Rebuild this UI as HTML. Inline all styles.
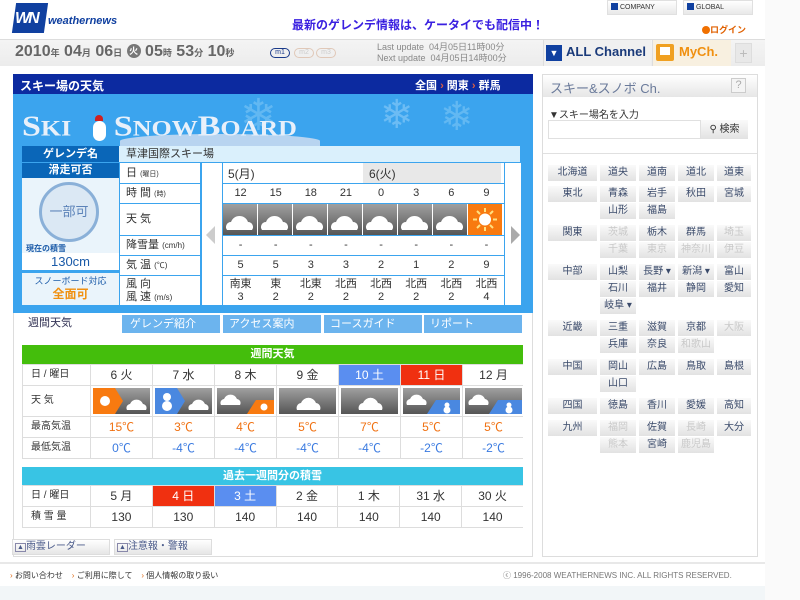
<!DOCTYPE html>
<html><head><meta charset="utf-8"><style>
*{margin:0;padding:0;box-sizing:border-box}
body{width:800px;height:600px;background:#fff;font-family:"Liberation Sans","Noto Sans CJK JP",sans-serif;position:relative;overflow:hidden;color:#333}
.a{position:absolute}
.rg{position:absolute;height:16px;font-size:10px;line-height:16px;text-align:center;color:#3a4a6a;background:linear-gradient(#fafafa,#e2e2e2);}
.rg.d{color:#c8c8c8}
.cell{position:absolute;background:#fff;text-align:center;font-size:11px;line-height:19px;color:#333}
.lb{position:absolute;background:#fff;font-size:10px;color:#333;padding-left:6px}
</style></head><body>
<svg width="0" height="0" style="position:absolute"><defs><linearGradient id="g" x1="0" y1="0" x2="0" y2="1"><stop offset="0" stop-color="#a0a0a0"/><stop offset="1" stop-color="#555"/></linearGradient></defs></svg>
<!-- header -->
<div class="a" style="left:14px;top:3px;width:32px;height:30px;background:#1040a0;transform:skewX(-8deg)"></div>
<div class="a" style="left:15px;top:10px;color:#fff;font-weight:bold;font-style:italic;font-size:16px;letter-spacing:-2px">WN</div>
<div class="a" style="left:48px;top:15px;color:#1040a0;font-weight:bold;font-style:italic;font-size:11px">weathernews</div>
<div class="a" style="left:292px;top:16px;color:#3a20e0;font-weight:bold;font-size:12px">最新のゲレンデ情報は、ケータイでも配信中！</div>
<div class="a" style="left:607px;top:0;width:70px;height:15px;background:linear-gradient(#fff,#e8e8e8);border:1px solid #e0e0e0;font-size:7px;line-height:13px;padding-left:3px;color:#333"><span style="display:inline-block;width:7px;height:7px;background:#1040a0;vertical-align:-1px"></span> COMPANY</div>
<div class="a" style="left:683px;top:0;width:70px;height:15px;background:linear-gradient(#fff,#e8e8e8);border:1px solid #e0e0e0;font-size:7px;line-height:13px;padding-left:3px;color:#333"><span style="display:inline-block;width:7px;height:7px;background:#1040a0;vertical-align:-1px"></span> GLOBAL</div>
<div class="a" style="left:702px;top:23px;font-size:9px;font-weight:bold;color:#e06000"><span style="display:inline-block;width:8px;height:8px;border-radius:4px;background:#f07000;vertical-align:-1px"></span>ログイン</div>
<!-- date bar -->
<div class="a" style="left:0;top:39px;width:765px;height:27px;background:linear-gradient(#f4f4f4,#ececec);border-top:1px solid #ddd"></div>
<div class="a" style="left:15px;top:43px;font-size:16px;font-weight:bold;color:#666">2010<span style="font-size:9px">年</span> 04<span style="font-size:9px">月</span> 06<span style="font-size:9px">日</span> <span style="display:inline-block;width:14px;height:14px;border-radius:7px;background:#777;color:#fff;font-size:9px;text-align:center;line-height:14px;vertical-align:2px">火</span> 05<span style="font-size:9px">時</span> 53<span style="font-size:9px">分</span> 10<span style="font-size:9px">秒</span></div>
<div class="a" style="left:270px;top:48px;width:20px;height:10px;border:1px solid #1a3a8a;border-radius:5px;font-size:7px;line-height:8px;text-align:center;color:#1a3a8a">m1</div>
<div class="a" style="left:294px;top:48px;width:20px;height:10px;border:1px solid #e0c8b8;border-radius:5px;font-size:7px;line-height:8px;text-align:center;color:#ccc">m2</div>
<div class="a" style="left:316px;top:48px;width:20px;height:10px;border:1px solid #e0c8b8;border-radius:5px;font-size:7px;line-height:8px;text-align:center;color:#ccc">m3</div>
<div class="a" style="left:377px;top:42px;font-size:9px;line-height:11px;color:#888">Last update&nbsp; 04月05日11時00分<br>Next update&nbsp; 04月05日14時00分</div>
<div class="a" style="left:543px;top:40px;width:108px;height:26px;border-left:1px solid #ddd;background:#f0f0f0"></div>
<div class="a" style="left:546px;top:45px;width:16px;height:16px;background:#1040a0;color:#fff;font-size:9px;text-align:center;line-height:16px">▼</div>
<div class="a" style="left:566px;top:44px;font-size:13px;font-weight:bold;color:#1a3a7a">ALL Channel</div>
<div class="a" style="left:652px;top:40px;width:79px;height:26px;background:#f8f0e0;border-left:1px solid #ddd"></div>
<div class="a" style="left:656px;top:44px;width:18px;height:17px;background:#f0a020;border-radius:2px"></div>
<div class="a" style="left:660px;top:47px;width:10px;height:8px;background:#fff"></div>
<div class="a" style="left:679px;top:44px;font-size:13px;font-weight:bold;color:#f09010">MyCh.</div>
<div class="a" style="left:735px;top:43px;width:17px;height:20px;background:#e8e8e8;border:1px solid #ddd;color:#bbb;font-size:14px;text-align:center;line-height:18px">+</div>
<div class="a" style="left:765px;top:0;width:35px;height:600px;background:#fafafa"></div>

<!-- main left -->
<div class="a" style="left:13px;top:74px;width:520px;height:483px;border:1px solid #ddd;background:#fff"></div>
<div class="a" style="left:13px;top:74px;width:520px;height:20px;background:#0c2aa0"></div>
<div class="a" style="left:20px;top:77px;color:#fff;font-size:12px;font-weight:bold">スキー場の天気</div>
<div class="a" style="left:415px;top:77px;color:#fff;font-size:11px;font-weight:bold">全国 <span style="color:#e06040">›</span> 関東 <span style="color:#e06040">›</span> 群馬</div>
<div class="a" style="left:13px;top:94px;width:520px;height:219px;background:#3ba4ee"></div>
<div class="a" style="left:240px;top:90px;font-size:44px;color:#62b8f2">❄</div>
<div class="a" style="left:380px;top:92px;font-size:40px;color:#6cbcf4">❄</div>
<div class="a" style="left:440px;top:94px;font-size:40px;color:#62b8f2">❄</div>
<div class="a" style="left:120px;top:134px;width:200px;height:14px;background:#b8d4f0;border-radius:50% 50% 0 0"></div>
<div class="a" style="left:22px;top:108px;font-size:34px;font-weight:bold;font-family:'Liberation Serif',serif;color:#e8f0fa;letter-spacing:0px;line-height:38px;transform:scaleY(0.85)">S<span style="font-size:26px">KI</span>&nbsp;&nbsp;&nbsp;&nbsp;&nbsp;S<span style="font-size:26px">NOW</span>B<span style="font-size:26px">OARD</span></div>
<div class="a" style="left:93px;top:121px;width:13px;height:20px;background:#fff;border-radius:7px"></div>
<div class="a" style="left:95px;top:115px;width:8px;height:6px;background:#d02020;border-radius:4px 4px 0 0"></div>
<!-- gelande name -->
<div class="a" style="left:22px;top:146px;width:97px;height:16px;background:#0a66b8;color:#fff;font-size:11px;font-weight:bold;text-align:center;line-height:16px">ゲレンデ名</div>
<div class="a" style="left:119px;top:146px;width:401px;height:16px;background:#daf0fc;font-size:11px;line-height:16px;padding-left:7px">草津国際スキー場</div>
<!-- left column -->
<div class="a" style="left:22px;top:163px;width:97px;height:15px;background:#0a66b8;color:#fff;font-size:11px;font-weight:bold;text-align:center;line-height:15px">滑走可否</div>
<div class="a" style="left:22px;top:178px;width:97px;height:92px;background:#eaf4fb"></div>
<div class="a" style="left:39px;top:182px;width:60px;height:60px;border:3px solid #8ab0d8;border-radius:50%;background:#dbe8f4;color:#5b82b8;font-size:13px;text-align:center;line-height:54px">一部可</div>
<div class="a" style="left:26px;top:243px;font-size:8px;font-weight:bold;color:#1a5aa8">現在の積雪</div>
<div class="a" style="left:22px;top:253px;width:97px;height:17px;background:#fff;color:#1a5aa8;font-size:13px;text-align:center;line-height:17px">130cm</div>
<div class="a" style="left:22px;top:273px;width:97px;height:32px;background:#eaf4fb;text-align:center;font-size:9px;color:#1a5aa8;line-height:13px;padding-top:2px">スノーボード対応<br><span style="color:#f09010;font-size:12px;font-weight:bold">全面可</span></div>
<!-- labels -->
<div class="lb" style="left:120px;top:163px;width:80px;height:20px;line-height:20px;font-size:11px">日 <span style="font-size:7px">(曜日)</span></div>
<div class="lb" style="left:120px;top:184px;width:80px;height:19px;line-height:19px;font-size:11px">時 間 <span style="font-size:7px">(時)</span></div>
<div class="lb" style="left:120px;top:204px;width:80px;height:31px;line-height:31px;font-size:11px">天 気</div>
<div class="lb" style="left:120px;top:236px;width:80px;height:19px;line-height:19px;font-size:11px">降雪量 <span style="font-size:8px">(cm/h)</span></div>
<div class="lb" style="left:120px;top:256px;width:80px;height:19px;line-height:19px;font-size:11px">気 温 <span style="font-size:8px">(℃)</span></div>
<div class="lb" style="left:120px;top:276px;width:80px;height:29px;line-height:13px;font-size:11px;padding-top:2px">風 向<br>風 速 <span style="font-size:8px">(m/s)</span></div>
<div class="a" style="left:202px;top:163px;width:20px;height:142px;background:#fff"></div>
<div class="a" style="left:206px;top:226px;width:0;height:0;border-top:9px solid transparent;border-bottom:9px solid transparent;border-right:9px solid #ccc"></div>
<div class="a" style="left:505px;top:163px;width:16px;height:142px;background:#fff"></div>
<div class="a" style="left:511px;top:226px;width:0;height:0;border-top:9px solid transparent;border-bottom:9px solid transparent;border-left:9px solid #aaa"></div>
<!-- data -->
<div class="a" style="left:223px;top:163px;width:281px;height:20px;background:#fff"></div>
<div class="a" style="left:363px;top:163px;width:138px;height:20px;background:#e8e8e8"></div>
<div class="a" style="left:228px;top:165px;font-size:12px">5(月)</div>
<div class="a" style="left:369px;top:165px;font-size:12px">6(火)</div>
<div class="a" style="left:223px;top:184px;width:281px;height:19px;background:#fff;display:flex;font-size:11px;line-height:19px"><div style="flex:1;text-align:center">12</div><div style="flex:1;text-align:center">15</div><div style="flex:1;text-align:center">18</div><div style="flex:1;text-align:center">21</div><div style="flex:1;text-align:center">0</div><div style="flex:1;text-align:center">3</div><div style="flex:1;text-align:center">6</div><div style="flex:1;text-align:center">9</div></div>
<div class="a" style="left:223px;top:204px;width:281px;height:31px;background:#fff;display:flex;gap:1px">
<svg width="34" height="31"><rect width="34" height="31" fill="url(#g)"/><path d="M4 26a5 5 0 0 1 4-8a9 9 0 0 1 17 0a5 5 0 0 1 4 8z" fill="#fff"/></svg>
<svg width="34" height="31"><rect width="34" height="31" fill="url(#g)"/><path d="M4 26a5 5 0 0 1 4-8a9 9 0 0 1 17 0a5 5 0 0 1 4 8z" fill="#fff"/></svg>
<svg width="34" height="31"><rect width="34" height="31" fill="url(#g)"/><path d="M4 26a5 5 0 0 1 4-8a9 9 0 0 1 17 0a5 5 0 0 1 4 8z" fill="#fff"/></svg>
<svg width="34" height="31"><rect width="34" height="31" fill="url(#g)"/><path d="M4 26a5 5 0 0 1 4-8a9 9 0 0 1 17 0a5 5 0 0 1 4 8z" fill="#fff"/></svg>
<svg width="34" height="31"><rect width="34" height="31" fill="url(#g)"/><path d="M4 26a5 5 0 0 1 4-8a9 9 0 0 1 17 0a5 5 0 0 1 4 8z" fill="#fff"/></svg>
<svg width="34" height="31"><rect width="34" height="31" fill="url(#g)"/><path d="M4 26a5 5 0 0 1 4-8a9 9 0 0 1 17 0a5 5 0 0 1 4 8z" fill="#fff"/></svg>
<svg width="34" height="31"><rect width="34" height="31" fill="url(#g)"/><path d="M4 26a5 5 0 0 1 4-8a9 9 0 0 1 17 0a5 5 0 0 1 4 8z" fill="#fff"/></svg>
<svg width="34" height="31"><rect width="34" height="31" fill="#f87a10"/><circle cx="17" cy="15.5" r="6" fill="#fff"/><path d="M17 4v4M17 23v4M5 15.5h4M25 15.5h4M9 7l3 3M25 7l-3 3M9 24l3-3M25 24l-3-3" stroke="#ffe080" stroke-width="2"/></svg>
</div>
<div class="a" style="left:223px;top:236px;width:281px;height:19px;background:#fff;display:flex;font-size:11px;line-height:19px"><div style="flex:1;text-align:center">-</div><div style="flex:1;text-align:center">-</div><div style="flex:1;text-align:center">-</div><div style="flex:1;text-align:center">-</div><div style="flex:1;text-align:center">-</div><div style="flex:1;text-align:center">-</div><div style="flex:1;text-align:center">-</div><div style="flex:1;text-align:center">-</div></div>
<div class="a" style="left:223px;top:256px;width:281px;height:19px;background:#fff;display:flex;font-size:11px;line-height:19px"><div style="flex:1;text-align:center">5</div><div style="flex:1;text-align:center">5</div><div style="flex:1;text-align:center">3</div><div style="flex:1;text-align:center">3</div><div style="flex:1;text-align:center">2</div><div style="flex:1;text-align:center">1</div><div style="flex:1;text-align:center">2</div><div style="flex:1;text-align:center">9</div></div>
<div class="a" style="left:223px;top:276px;width:281px;height:29px;background:#fff;display:flex;font-size:11px;line-height:13px;padding-top:2px"><div style="flex:1;text-align:center">南東<br>3</div><div style="flex:1;text-align:center">東<br>2</div><div style="flex:1;text-align:center">北東<br>2</div><div style="flex:1;text-align:center">北西<br>2</div><div style="flex:1;text-align:center">北西<br>2</div><div style="flex:1;text-align:center">北西<br>2</div><div style="flex:1;text-align:center">北西<br>2</div><div style="flex:1;text-align:center">北西<br>4</div></div>
<!-- tabs -->
<div class="a" style="left:22px;top:314px;width:98px;height:19px;background:#fff;font-size:11px;line-height:19px;padding-left:6px;color:#335">週間天気</div>
<div class="a" style="left:122px;top:315px;width:98px;height:18px;background:#6cb4ee;color:#fff;font-size:11px;line-height:18px;padding-left:8px">ゲレンデ紹介</div>
<div class="a" style="left:223px;top:315px;width:98px;height:18px;background:#6cb4ee;color:#fff;font-size:11px;line-height:18px;padding-left:6px">アクセス案内</div>
<div class="a" style="left:324px;top:315px;width:98px;height:18px;background:#6cb4ee;color:#fff;font-size:11px;line-height:18px;padding-left:6px">コースガイド</div>
<div class="a" style="left:424px;top:315px;width:98px;height:18px;background:#6cb4ee;color:#fff;font-size:11px;line-height:18px;padding-left:6px">リポート</div>
<!-- weekly -->
<div class="a" style="left:22px;top:345px;width:501px;height:114px;background:#ddd"></div>
<div class="a" style="left:22px;top:345px;width:501px;height:19px;background:#44be0c;color:#fff;font-size:11px;font-weight:bold;text-align:center;line-height:19px">週間天気</div>
<div class="cell" style="left:23px;top:365px;width:67px;height:20px;text-align:left;padding-left:8px;font-size:10px">日 / 曜日</div>
<div class="cell" style="left:23px;top:386px;width:67px;height:30px;text-align:left;padding-left:8px;font-size:10px;line-height:30px">天 気</div>
<div class="cell" style="left:23px;top:417px;width:67px;height:20px;text-align:left;padding-left:8px;font-size:10px">最高気温</div>
<div class="cell" style="left:23px;top:438px;width:67px;height:20px;text-align:left;padding-left:8px;font-size:10px">最低気温</div>
<div class="a" style="left:91px;top:365px;width:432px;height:93px;display:grid;grid-template-columns:repeat(7,1fr);grid-template-rows:20px 30px 20px 20px;gap:1px;font-size:12px;text-align:center;line-height:20px">
<div style="background:#fff">6 火</div><div style="background:#fff">7 水</div><div style="background:#fff">8 木</div><div style="background:#fff">9 金</div><div style="background:#5a8ef0;color:#fff">10 土</div><div style="background:#f03010;color:#fff">11 日</div><div style="background:#fff">12 月</div>
<div style="background:#fff;padding:2px"><svg width="57" height="26"><rect width="57" height="26" fill="url(#g)"/><path d="M0 0h22l8 13l-8 13H0z" fill="#f87a10"/><circle cx="12" cy="13" r="5" fill="#fff"/><path d="M34 22a4 4 0 0 1 3-6a7 7 0 0 1 13 0a4 4 0 0 1 3 6z" fill="#fff"/></svg></div>
<div style="background:#fff;padding:2px"><svg width="57" height="26"><rect width="57" height="26" fill="url(#g)"/><path d="M0 0h22l8 13l-8 13H0z" fill="#4a88e0"/><circle cx="12" cy="9" r="4" fill="#fff"/><circle cx="12" cy="18" r="5" fill="#fff"/><path d="M34 22a4 4 0 0 1 3-6a7 7 0 0 1 13 0a4 4 0 0 1 3 6z" fill="#fff"/></svg></div>
<div style="background:#fff;padding:2px"><svg width="57" height="26"><rect width="57" height="26" fill="url(#g)"/><path d="M4 17a4 4 0 0 1 3-6a7 7 0 0 1 13 0a4 4 0 0 1 3 6z" fill="#fff"/><path d="M30 26l9-14h18v14z" fill="#f87a10"/><circle cx="47" cy="19" r="3.5" fill="#fff"/></svg></div>
<div style="background:#fff;padding:2px"><svg width="57" height="26"><rect width="57" height="26" fill="url(#g)"/><path d="M18 22a5 5 0 0 1 4-7a8 8 0 0 1 15 0a5 5 0 0 1 4 7z" fill="#fff"/></svg></div>
<div style="background:#fff;padding:2px"><svg width="57" height="26"><rect width="57" height="26" fill="url(#g)"/><path d="M18 22a5 5 0 0 1 4-7a8 8 0 0 1 15 0a5 5 0 0 1 4 7z" fill="#fff"/></svg></div>
<div style="background:#fff;padding:2px"><svg width="57" height="26"><rect width="57" height="26" fill="url(#g)"/><path d="M4 17a4 4 0 0 1 3-6a7 7 0 0 1 13 0a4 4 0 0 1 3 6z" fill="#fff"/><path d="M24 26l9-14h24v14z" fill="#4a88e0"/><circle cx="44" cy="17" r="2.5" fill="#fff"/><circle cx="44" cy="22" r="3.5" fill="#fff"/></svg></div>
<div style="background:#fff;padding:2px"><svg width="57" height="26"><rect width="57" height="26" fill="url(#g)"/><path d="M4 17a4 4 0 0 1 3-6a7 7 0 0 1 13 0a4 4 0 0 1 3 6z" fill="#fff"/><path d="M24 26l9-14h24v14z" fill="#4a88e0"/><circle cx="44" cy="17" r="2.5" fill="#fff"/><circle cx="44" cy="22" r="3.5" fill="#fff"/></svg></div>
<div style="background:#fff;color:#f07010">15℃</div><div style="background:#fff;color:#f07010">3℃</div><div style="background:#fff;color:#f07010">4℃</div><div style="background:#fff;color:#f07010">5℃</div><div style="background:#fff;color:#f07010">7℃</div><div style="background:#fff;color:#f07010">5℃</div><div style="background:#fff;color:#f07010">5℃</div>
<div style="background:#fff;color:#3a7ae0">0℃</div><div style="background:#fff;color:#3a7ae0">-4℃</div><div style="background:#fff;color:#3a7ae0">-4℃</div><div style="background:#fff;color:#3a7ae0">-4℃</div><div style="background:#fff;color:#3a7ae0">-4℃</div><div style="background:#fff;color:#3a7ae0">-2℃</div><div style="background:#fff;color:#3a7ae0">-2℃</div>
</div>
<!-- past snow -->
<div class="a" style="left:22px;top:467px;width:501px;height:61px;background:#ddd"></div>
<div class="a" style="left:22px;top:467px;width:501px;height:18px;background:#38c4e4;color:#fff;font-size:11px;font-weight:bold;text-align:center;line-height:18px">過去一週間分の積雪</div>
<div class="cell" style="left:23px;top:486px;width:67px;height:20px;text-align:left;padding-left:8px;font-size:10px">日 / 曜日</div>
<div class="cell" style="left:23px;top:507px;width:67px;height:20px;text-align:left;padding-left:8px;font-size:10px">積 雪 量</div>
<div class="a" style="left:91px;top:486px;width:432px;height:41px;display:grid;grid-template-columns:repeat(7,1fr);grid-template-rows:20px 20px;gap:1px;font-size:12px;text-align:center;line-height:20px">
<div style="background:#fff">5 月</div><div style="background:#f03010;color:#fff">4 日</div><div style="background:#5a8ef0;color:#fff">3 土</div><div style="background:#fff">2 金</div><div style="background:#fff">1 木</div><div style="background:#fff">31 水</div><div style="background:#fff">30 火</div>
<div style="background:#fff">130</div><div style="background:#fff">130</div><div style="background:#fff">140</div><div style="background:#fff">140</div><div style="background:#fff">140</div><div style="background:#fff">140</div><div style="background:#fff">140</div>
</div>
<!-- bottom tabs -->
<div class="a" style="left:12px;top:539px;width:98px;height:16px;background:linear-gradient(#fff,#e6e6e6);border:1px solid #ddd;font-size:10px;line-height:14px;padding-left:2px;color:#4a5a8a"><span style="font-size:7px;border:1px solid #88a;padding:0 1px">▲</span>雨雲レーダー</div>
<div class="a" style="left:114px;top:539px;width:98px;height:16px;background:linear-gradient(#fff,#e6e6e6);border:1px solid #ddd;font-size:10px;line-height:14px;padding-left:2px;color:#4a5a8a"><span style="font-size:7px;border:1px solid #88a;padding:0 1px">▲</span>注意報・警報</div>
<!-- footer -->
<div class="a" style="left:0;top:562px;width:765px;height:2px;background:#e8e8e8"></div>
<div class="a" style="left:10px;top:570px;font-size:8px;color:#333"><span style="color:#e07020">›</span> お問い合わせ&nbsp;&nbsp;&nbsp;&nbsp;<span style="color:#e07020">›</span> ご利用に際して&nbsp;&nbsp;&nbsp;&nbsp;<span style="color:#e07020">›</span> 個人情報の取り扱い</div>
<div class="a" style="left:503px;top:570px;font-size:8px;color:#777">ⓒ 1996-2008 WEATHERNEWS INC. ALL RIGHTS RESERVED.</div>
<div class="a" style="left:0;top:586px;width:765px;height:14px;background:#f2f6f8"></div>

<!-- right panel -->
<div class="a" style="left:542px;top:74px;width:216px;height:483px;border:1px solid #ddd;background:#fff"></div>
<div class="a" style="left:543px;top:75px;width:214px;height:22px;background:linear-gradient(#fff,#e6e6e6)"></div>
<div class="a" style="left:550px;top:78px;font-size:13px;color:#6a7a9a">スキー&amp;スノボ Ch.</div>
<div class="a" style="left:731px;top:78px;width:15px;height:15px;border:1px solid #ccc;background:#f4f4f4;color:#aaa;font-size:11px;text-align:center;line-height:13px">?</div>
<div class="a" style="left:549px;top:106px;font-size:10px;color:#333">▼スキー場名を入力</div>
<div class="a" style="left:548px;top:120px;width:153px;height:19px;border:1px solid #e0e0e0;background:#fff"></div>
<div class="a" style="left:701px;top:120px;width:47px;height:19px;background:linear-gradient(#fafafa,#e2e2e2);font-size:10px;line-height:19px;text-align:center;color:#333">⚲ 検索</div>
<div class="a" style="left:543px;top:153px;width:214px;height:1px;background:#e0e0e0"></div>

<div class="rg" style="left:548px;top:165px;width:49px">北海道</div><div class="rg" style="left:600px;top:165px;width:36px">道央</div><div class="rg" style="left:639px;top:165px;width:36px">道南</div><div class="rg" style="left:678px;top:165px;width:36px">道北</div><div class="rg" style="left:717px;top:165px;width:34px">道東</div>
<div class="rg" style="left:548px;top:186px;width:49px">東北</div><div class="rg" style="left:600px;top:186px;width:36px">青森</div><div class="rg" style="left:639px;top:186px;width:36px">岩手</div><div class="rg" style="left:678px;top:186px;width:36px">秋田</div><div class="rg" style="left:717px;top:186px;width:34px">宮城</div>
<div class="rg" style="left:600px;top:203px;width:36px">山形</div><div class="rg" style="left:639px;top:203px;width:36px">福島</div>
<div class="rg" style="left:548px;top:225px;width:49px">関東</div><div class="rg d" style="left:600px;top:225px;width:36px">茨城</div><div class="rg" style="left:639px;top:225px;width:36px">栃木</div><div class="rg" style="left:678px;top:225px;width:36px">群馬</div><div class="rg d" style="left:717px;top:225px;width:34px">埼玉</div>
<div class="rg d" style="left:600px;top:242px;width:36px">千葉</div><div class="rg d" style="left:639px;top:242px;width:36px">東京</div><div class="rg d" style="left:678px;top:242px;width:36px">神奈川</div><div class="rg d" style="left:717px;top:242px;width:34px">伊豆</div>
<div class="rg" style="left:548px;top:264px;width:49px">中部</div><div class="rg" style="left:600px;top:264px;width:36px">山梨</div><div class="rg" style="left:639px;top:264px;width:36px">長野 ▾</div><div class="rg" style="left:678px;top:264px;width:36px">新潟 ▾</div><div class="rg" style="left:717px;top:264px;width:34px">富山</div>
<div class="rg" style="left:600px;top:281px;width:36px">石川</div><div class="rg" style="left:639px;top:281px;width:36px">福井</div><div class="rg" style="left:678px;top:281px;width:36px">静岡</div><div class="rg" style="left:717px;top:281px;width:34px">愛知</div>
<div class="rg" style="left:600px;top:298px;width:36px">岐阜 ▾</div>
<div class="rg" style="left:548px;top:320px;width:49px">近畿</div><div class="rg" style="left:600px;top:320px;width:36px">三重</div><div class="rg" style="left:639px;top:320px;width:36px">滋賀</div><div class="rg" style="left:678px;top:320px;width:36px">京都</div><div class="rg d" style="left:717px;top:320px;width:34px">大阪</div>
<div class="rg" style="left:600px;top:337px;width:36px">兵庫</div><div class="rg" style="left:639px;top:337px;width:36px">奈良</div><div class="rg d" style="left:678px;top:337px;width:36px">和歌山</div>
<div class="rg" style="left:548px;top:359px;width:49px">中国</div><div class="rg" style="left:600px;top:359px;width:36px">岡山</div><div class="rg" style="left:639px;top:359px;width:36px">広島</div><div class="rg" style="left:678px;top:359px;width:36px">鳥取</div><div class="rg" style="left:717px;top:359px;width:34px">島根</div>
<div class="rg" style="left:600px;top:376px;width:36px">山口</div>
<div class="rg" style="left:548px;top:398px;width:49px">四国</div><div class="rg" style="left:600px;top:398px;width:36px">徳島</div><div class="rg" style="left:639px;top:398px;width:36px">香川</div><div class="rg" style="left:678px;top:398px;width:36px">愛媛</div><div class="rg" style="left:717px;top:398px;width:34px">高知</div>
<div class="rg" style="left:548px;top:420px;width:49px">九州</div><div class="rg d" style="left:600px;top:420px;width:36px">福岡</div><div class="rg" style="left:639px;top:420px;width:36px">佐賀</div><div class="rg d" style="left:678px;top:420px;width:36px">長崎</div><div class="rg" style="left:717px;top:420px;width:34px">大分</div>
<div class="rg d" style="left:600px;top:437px;width:36px">熊本</div><div class="rg" style="left:639px;top:437px;width:36px">宮崎</div><div class="rg d" style="left:678px;top:437px;width:36px">鹿児島</div>
</body></html>
